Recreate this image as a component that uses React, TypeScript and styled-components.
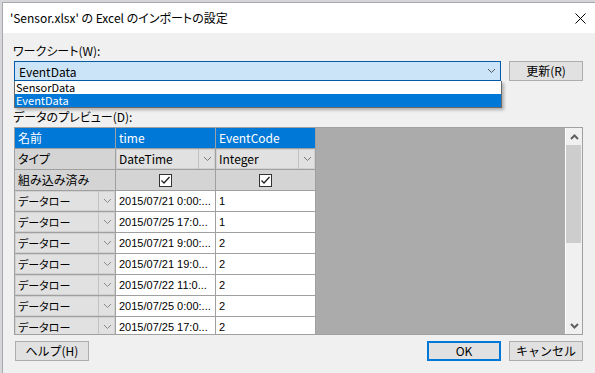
import React from 'react';
import styled, { createGlobalStyle } from 'styled-components';

const GlobalStyle = createGlobalStyle`
  html, body {
    margin: 0;
    padding: 0;
  }
  body {
    width: 595px;
    height: 373px;
    overflow: hidden;
    background: #d4d6d9;
    font-family: 'Noto Sans CJK JP', 'Noto Sans', sans-serif;
    font-size: 12px;
    color: #000;
    font-feature-settings: 'palt';
  }
`;

const Desktop = styled.div`
    display: flex;
    height: 373px;
    box-sizing: border-box;
    padding: 2px 0 0 2px;
`;

const Dialog = styled.div`
    flex: 1;
    display: flex;
    flex-direction: column;
    background: #f0f0f0;
    border-left: 1px solid #a9a9a9;
    border-top: 1px solid #a9a9a9;
`;

const TitleBar = styled.div`
    display: flex;
    align-items: center;
    justify-content: space-between;
    height: 30px;
    padding: 0 9px 0 7px;
    background: #fff;
`;

const TitleText = styled.span`
    font-size: 12px;
    line-height: 16px;
`;

const Content = styled.div`
    display: flex;
    flex-direction: column;
    padding: 10px 12px 0 11px;
`;

const FieldLabel = styled.div<{ $top?: number }>`
    height: 15px;
    line-height: 15px;
    margin: ${p => p.$top || 0}px 0 3px -1px;
`;

const ComboRow = styled.div`
    display: flex;
    gap: 8px;
    height: 20px;
`;

const ComboWrap = styled.div`
    position: relative;
    flex: 1;
`;

const Combo = styled.div`
    display: flex;
    align-items: center;
    justify-content: space-between;
    height: 20px;
    box-sizing: border-box;
    padding: 0 4px 0 4px;
    background: #cce4f7;
    border: 1px solid #005ba8;
`;

const DropList = styled.div`
    position: absolute;
    top: 20px;
    left: 0;
    right: -1px;
    background: #fff;
    border: 1px solid #6a6a6a;
    border-top: none;
    box-shadow: 2px 2px 3px rgba(0, 0, 0, 0.28);
    z-index: 2;
`;

const DropItem = styled.div<{ $selected?: boolean }>`
    height: 13px;
    line-height: 13px;
    padding-left: 1px;
    font-size: 11px;
    background: ${p => (p.$selected ? '#0078d7' : '#fff')};
    color: ${p => (p.$selected ? '#fff' : '#000')};
`;

const Button = styled.button<{ $default?: boolean }>`
    width: 74px;
    height: 20px;
    box-sizing: border-box;
    padding: 0;
    font-family: inherit;
    font-size: 12px;
    line-height: 16px;
    color: #000;
    background: #e1e1e1;
    border: ${p => (p.$default ? '2px solid #0078d7' : '1px solid #adadad')};
`;

const Frame = styled.div`
    display: flex;
    height: 208px;
    box-sizing: border-box;
    border: 1px solid #a0a0a0;
`;

const Sheet = styled.div`
    flex: 1;
    overflow: hidden;
    background: #ababab;
`;

const Grid = styled.div`
    display: grid;
    grid-template-columns: 100px 99px 99px;
    grid-auto-rows: 20px;
    gap: 1px;
    width: fit-content;
    padding-right: 1px;
    background: #a0a0a0;
`;

const HeadCell = styled.div`
    padding-left: 3px;
    line-height: 20px;
    background: #0078d7;
    color: #fff;
`;

const LabelCell = styled.div`
    padding-left: 3px;
    line-height: 20px;
    background: #d4d4d4;
    white-space: nowrap;
`;

const CheckCell = styled.div`
    display: flex;
    align-items: center;
    justify-content: center;
    background: #d4d4d4;
`;

const CheckBox = styled.div`
    display: flex;
    align-items: center;
    justify-content: center;
    width: 13px;
    height: 13px;
    box-sizing: border-box;
    border: 1px solid #333;
    background: #fff;
`;

const PickCell = styled.div<{ $small?: boolean }>`
    display: flex;
    background: #e1e1e1;
    box-shadow: inset 0 0 0 1px #d0d0d0;
    font-size: ${p => (p.$small ? '11px' : '12px')};
`;

const PickText = styled.span`
    flex: 1;
    padding-left: 3px;
    line-height: 20px;
    white-space: nowrap;
    overflow: hidden;
`;

const PickArrow = styled.span`
    display: flex;
    align-items: center;
    justify-content: center;
    width: 16px;
    border-left: 1px solid #c2c2c2;
`;

const DataCell = styled.div`
    padding-left: 3px;
    line-height: 20px;
    background: #fff;
    font-family: 'Liberation Sans', Arial, sans-serif;
    font-size: 11px;
    white-space: nowrap;
    overflow: hidden;
`;

const ScrollBar = styled.div`
    display: flex;
    flex-direction: column;
    width: 16px;
    background: #f0f0f0;
    border-left: 1px solid #fff;
`;

const ScrollButton = styled.div`
    display: flex;
    align-items: center;
    justify-content: center;
    height: 17px;
`;

const ScrollThumb = styled.div`
    height: 98px;
    margin: 0 1px 0 0;
    background: #cdcdcd;
`;

const ScrollSpacer = styled.div`
    flex: 1;
`;

const Footer = styled.div`
    display: flex;
    gap: 8px;
    margin-top: 6px;
    padding-left: 1px;
`;

const Spacer = styled.div`
    flex: 1 1 auto;
`;

const Chevron = ({ color = '#606060', up = false, bold = false }: { color?: string; up?: boolean; bold?: boolean }) => (
    <svg width="9" height="6" viewBox="0 0 9 6">
        <path
            d={up ? 'M1 5 L4.5 1.5 L8 5' : 'M1 1 L4.5 4.5 L8 1'}
            fill="none"
            stroke={color}
            strokeWidth={bold ? 2 : 1}
        />
    </svg>
);

const CloseIcon = () => (
    <svg width="11" height="11" viewBox="0 0 11 11">
        <path d="M0.5 0.5 L10.5 10.5 M10.5 0.5 L0.5 10.5" stroke="#000" strokeWidth="1" />
    </svg>
);

const CheckMark = () => (
    <svg width="11" height="11" viewBox="0 0 11 11">
        <path d="M1.5 5.5 L4 8 L9.5 2" fill="none" stroke="#222" strokeWidth="1.3" />
    </svg>
);

const rows: [string, string][] = [
    ['2015/07/21 0:00:...', '1'],
    ['2015/07/25 17:0...', '1'],
    ['2015/07/21 9:00:...', '2'],
    ['2015/07/21 19:0...', '2'],
    ['2015/07/22 11:0...', '2'],
    ['2015/07/25 0:00:...', '2'],
    ['2015/07/25 17:0...', '2'],
];

export default function App () {
    return (
        <>
            <GlobalStyle />
            <Desktop>
                <Dialog>
                    <TitleBar>
                        <TitleText>'Sensor.xlsx' の Excel のインポートの設定</TitleText>
                        <CloseIcon />
                    </TitleBar>
                    <Content>
                        <FieldLabel>ワークシート(W):</FieldLabel>
                        <ComboRow>
                            <ComboWrap>
                                <Combo>
                                    <span>EventData</span>
                                    <Chevron color="#555" />
                                </Combo>
                                <DropList>
                                    <DropItem>SensorData</DropItem>
                                    <DropItem $selected>EventData</DropItem>
                                </DropList>
                            </ComboWrap>
                            <Button>更新(R)</Button>
                        </ComboRow>
                        <FieldLabel $top={28}>データのプレビュー(D):</FieldLabel>
                        <Frame>
                            <Sheet>
                                <Grid>
                                    <HeadCell>名前</HeadCell>
                                    <HeadCell>time</HeadCell>
                                    <HeadCell>EventCode</HeadCell>

                                    <LabelCell>タイプ</LabelCell>
                                    <PickCell>
                                        <PickText>DateTime</PickText>
                                        <PickArrow><Chevron color="#777" /></PickArrow>
                                    </PickCell>
                                    <PickCell>
                                        <PickText>Integer</PickText>
                                        <PickArrow><Chevron color="#777" /></PickArrow>
                                    </PickCell>

                                    <LabelCell>組み込み済み</LabelCell>
                                    <CheckCell><CheckBox><CheckMark /></CheckBox></CheckCell>
                                    <CheckCell><CheckBox><CheckMark /></CheckBox></CheckCell>

                                    {rows.map(([time, code], idx) => (
                                        <React.Fragment key={`row-${idx}`}>
                                            <PickCell $small>
                                                <PickText>データロー</PickText>
                                                <PickArrow><Chevron color="#888" /></PickArrow>
                                            </PickCell>
                                            <DataCell>{time}</DataCell>
                                            <DataCell>{code}</DataCell>
                                        </React.Fragment>
                                    ))}
                                </Grid>
                            </Sheet>
                            <ScrollBar>
                                <ScrollButton><Chevron up bold /></ScrollButton>
                                <ScrollThumb />
                                <ScrollSpacer />
                                <ScrollButton><Chevron bold /></ScrollButton>
                            </ScrollBar>
                        </Frame>
                        <Footer>
                            <Button>ヘルプ(H)</Button>
                            <Spacer />
                            <Button $default>OK</Button>
                            <Button>キャンセル</Button>
                        </Footer>
                    </Content>
                </Dialog>
            </Desktop>
        </>
    );
}
